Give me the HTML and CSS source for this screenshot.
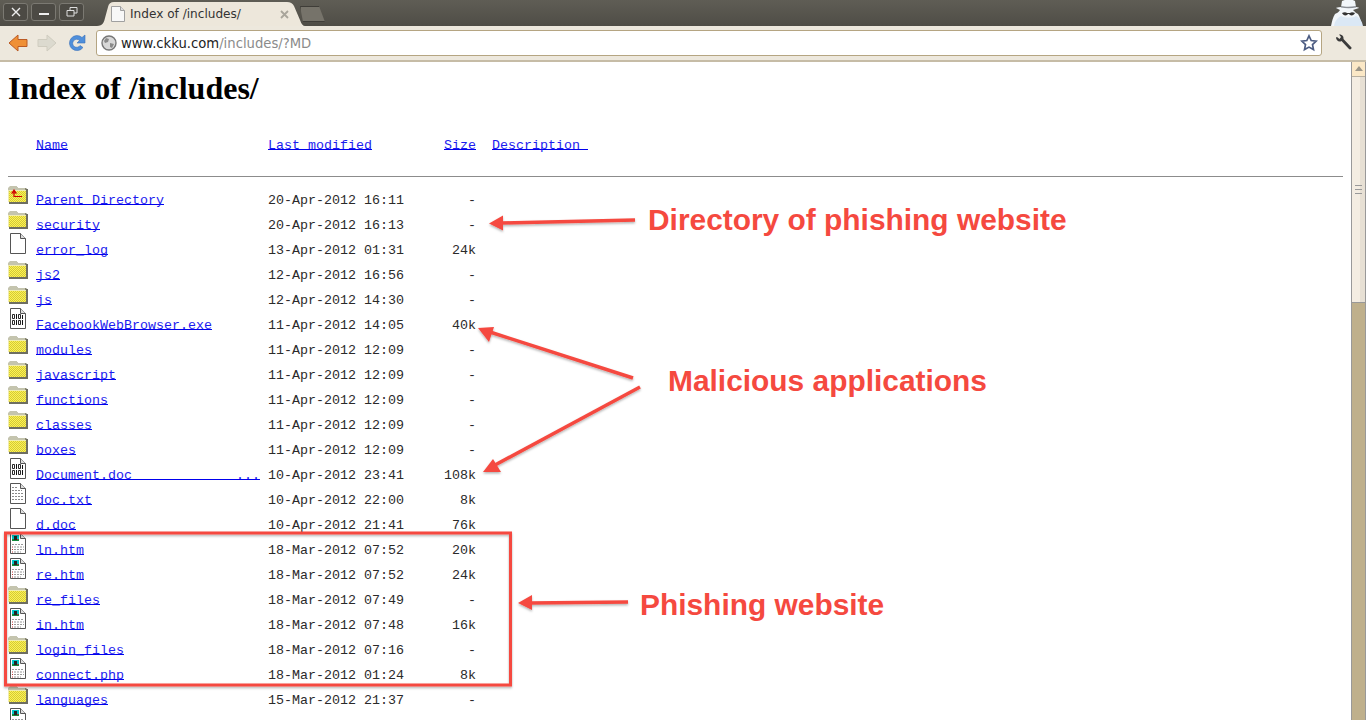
FILE: index.html
```html
<!DOCTYPE html>
<html lang="en">
<head>
  <meta charset="UTF-8">
  <title>Index of /includes/</title>
  <link rel="stylesheet" href="styles.css">
</head>
<body>
  <svg class="defs" width="0" height="0">
    <defs>
      <pattern id="dither" width="2" height="2" patternUnits="userSpaceOnUse">
        <rect width="2" height="2" fill="#fff650"/>
        <rect width="1" height="1" fill="#d2c63c"/>
        <rect x="1" y="1" width="1" height="1" fill="#d2c63c"/>
      </pattern>
      <symbol id="folder" viewBox="0 0 20 22">
        <path d="M1 8V6l2-2h5l2 2h8l1 1v14H1z" fill="#8a8a70"/>
        <path d="M0 8V6l2-2h6l2 2h7v2z" fill="#c4c4ae"/>
        <rect x="0" y="8" width="18" height="12" fill="url(#dither)"/>
        <path d="M0 8h18v1H1v11H0z" fill="#f0ecb0"/>
        <path d="M18 7h2v15H1v-2h17z" fill="#6e6e62"/>
      </symbol>
      <symbol id="parent" viewBox="0 0 20 22">
        <use href="#folder"/>
        <path d="M6 9v5.500h8M4 11l2-3 2 3z" fill="none" stroke="#d00000" stroke-width="1.200"/>
      </symbol>
      <symbol id="blank" viewBox="0 0 20 22">
        <path d="M2.500 1.500h10l5 5v15h-15z" fill="#fff" stroke="#555"/>
        <path d="M12.500 1.500v5h5" fill="#ddd" stroke="#555"/>
      </symbol>
      <symbol id="binary" viewBox="0 0 20 22">
        <use href="#blank"/>
        <path d="M4.500 7.500h2v4h-2zM10.500 7.500h2v4h-2zM4.500 13.500h2v4h-2zM10.500 13.500h2v4h-2z" fill="none" stroke="#111" stroke-width=".9"/>
        <path d="M8.500 7v5M14.500 8v4M8.500 13v5M14.500 13v5" stroke="#111" stroke-width="1"/>
      </symbol>
      <symbol id="text" viewBox="0 0 20 22">
        <use href="#blank"/>
        <path d="M4 5.500h6M4 8.500h10M4 11.500h12M4 14.500h12M4 17.500h12" stroke="#8a8a8a" stroke-dasharray="2 1"/>
      </symbol>
      <symbol id="html" viewBox="0 0 20 22">
        <use href="#blank"/>
        <rect x="4" y="3" width="7" height="4" fill="#00c8c8"/>
        <rect x="4" y="7" width="7" height="2" fill="#148a3c"/>
        <rect x="6" y="4" width="3" height="4" fill="#222"/>
        <rect x="9" y="7" width="1" height="1" fill="#d02020"/>
        <path d="M4 12.500h12M6 15h10M6 17.500h10" stroke="#999" stroke-dasharray="2 1"/>
        <path d="M4 15h1M4 17.500h1M4 20h1" stroke="#c03030"/>
        <path d="M6 20h7" stroke="#999" stroke-dasharray="2 1"/>
      </symbol>
    </defs>
  </svg>

  <div class="window">
    <div class="tabstrip">
      <div class="winbuttons">
        <span class="winbtn"><svg width="12" height="12" viewBox="0 0 12 12"><path d="M2 2l8 8M10 2l-8 8" stroke="#eee" stroke-width="1.400"/></svg></span>
        <span class="winbtn"><svg width="12" height="12" viewBox="0 0 12 12"><path d="M1 8h10" stroke="#eee" stroke-width="2"/></svg></span>
        <span class="winbtn"><svg width="12" height="12" viewBox="0 0 12 12"><path d="M4 4V1.500h7V7H8M1 4.500h7V10H1z" fill="none" stroke="#ddd"/></svg></span>
      </div>
      <div class="tab">
        <svg class="favicon" width="14" height="16" viewBox="0 0 14 16"><path d="M.5.500h9l4 4v11H.5z" fill="#f8f8f8" stroke="#a0a0a0"/><path d="M9.500.500v4h4" fill="#ddd" stroke="#a0a0a0"/></svg>
        <span class="tab-title">Index of /includes/</span>
        <svg class="tab-close" width="9" height="9" viewBox="0 0 9 9"><path d="M1 1l7 7M8 1L1 8" stroke="#a9a59b" stroke-width="1.800"/></svg>
      </div>
      <div class="newtab"></div>
      <svg class="spy" width="36" height="26" viewBox="0 0 36 26">
        <path d="M11 7l1-6c4-2 10-2 13 0l1 6c2 0 3 1 3 1l-6 2c2 2 3 3 5 4 2 3 3 7 4 12H1c1-5 2-9 4-12 2-1 4-2 5-4L6 8s2-1 5-1z" fill="#f2f6fa"/>
        <path d="M11 6c4 1 10 1 15 0v1.500c-5 1-10 1-15 0z" fill="#8b8f96"/>
        <path d="M12 13c2-1 4-1 5 0h3c1-1 3-1 5 0-1 2-3 3-5 2l-1-1h-1l-1 1c-2 1-4 0-5-2z" fill="#333"/>
        <path d="M4 26c1-5 3-8 7-10 4 2 12 2 15 0 4 2 6 5 7 10z" fill="#dbe8f5"/>
      </svg>
    </div>

    <div class="toolbar">
      <svg class="navicon back" width="20" height="20" viewBox="0 0 20 20"><path d="M1 10l9-8v4.500h9v7h-9V18z" fill="#ef9036" stroke="#bb5a24"/></svg>
      <svg class="navicon forward" width="20" height="20" viewBox="0 0 20 20"><path d="M19 10l-9-8v4.500H1v7h9V18z" fill="#dcdacf" stroke="#cfccbf"/></svg>
      <svg class="navicon reload" width="20" height="20" viewBox="0 0 20 20"><path d="M16 14.500a7.500 7.500 0 1 1-1-10L18 2v8h-8l2.500-2.500a4 4 0 1 0 .5 5z" fill="#4f8fdb" stroke="#3a70b8" stroke-width=".6"/></svg>
      <div class="omnibox">
        <svg class="globe" width="16" height="16" viewBox="0 0 16 16"><circle cx="8" cy="8" r="7" fill="#d8d8d8" stroke="#777" stroke-width="1.400"/><path d="M5 3l3 1-1 3-3 1-1-2zM9 8l4 1-2 4-2-1z" fill="#8a8a8a"/></svg>
        <span class="url"><span class="host">www.ckku.com</span>/includes/?MD</span>
        <svg class="star" width="18" height="18" viewBox="0 0 18 18"><path d="M9 1.800l2.200 4.700 5 .6-3.700 3.500 1 5L9 13.100l-4.500 2.500 1-5L1.800 7.100l5-.6z" fill="#fff" stroke="#4c5c82" stroke-width="1.700"/></svg>
      </div>
      <svg class="wrench" width="18" height="18" viewBox="0 0 18 18"><path d="M1 3.500c0 3 3 5 5.500 3.500l7.500 8c1 1 3 0 2.500-1.500L8.500 5C9 2.500 7 0 4 .5l2 2.500-1.500 2L2 3z" fill="#3b3b3b"/></svg>
    </div>

    <div class="viewer">
      <main class="page">
        <h1>Index of /includes/</h1>
        <div class="row head">
          <span class="name"><a href="#">Name</a></span>
          <span class="date"><a href="#">Last modified</a></span>
          <span class="size"><a href="#">Size</a></span>
          <span class="desc"><a href="#">Description </a></span>
        </div>
        <hr>
        <div class="listing">
          <div class="row"><svg class="icon"><use href="#parent"/></svg><span class="name"><a href="#">Parent Directory</a></span><span class="date">20-Apr-2012 16:11</span><span class="size">-</span></div>
          <div class="row"><svg class="icon"><use href="#folder"/></svg><span class="name"><a href="#">security</a></span><span class="date">20-Apr-2012 16:13</span><span class="size">-</span></div>
          <div class="row"><svg class="icon"><use href="#blank"/></svg><span class="name"><a href="#">error_log</a></span><span class="date">13-Apr-2012 01:31</span><span class="size">24k</span></div>
          <div class="row"><svg class="icon"><use href="#folder"/></svg><span class="name"><a href="#">js2</a></span><span class="date">12-Apr-2012 16:56</span><span class="size">-</span></div>
          <div class="row"><svg class="icon"><use href="#folder"/></svg><span class="name"><a href="#">js</a></span><span class="date">12-Apr-2012 14:30</span><span class="size">-</span></div>
          <div class="row"><svg class="icon"><use href="#binary"/></svg><span class="name"><a href="#">FacebookWebBrowser.exe</a></span><span class="date">11-Apr-2012 14:05</span><span class="size">40k</span></div>
          <div class="row"><svg class="icon"><use href="#folder"/></svg><span class="name"><a href="#">modules</a></span><span class="date">11-Apr-2012 12:09</span><span class="size">-</span></div>
          <div class="row"><svg class="icon"><use href="#folder"/></svg><span class="name"><a href="#">javascript</a></span><span class="date">11-Apr-2012 12:09</span><span class="size">-</span></div>
          <div class="row"><svg class="icon"><use href="#folder"/></svg><span class="name"><a href="#">functions</a></span><span class="date">11-Apr-2012 12:09</span><span class="size">-</span></div>
          <div class="row"><svg class="icon"><use href="#folder"/></svg><span class="name"><a href="#">classes</a></span><span class="date">11-Apr-2012 12:09</span><span class="size">-</span></div>
          <div class="row"><svg class="icon"><use href="#folder"/></svg><span class="name"><a href="#">boxes</a></span><span class="date">11-Apr-2012 12:09</span><span class="size">-</span></div>
          <div class="row"><svg class="icon"><use href="#binary"/></svg><span class="name"><a href="#">Document.doc             ...</a></span><span class="date">10-Apr-2012 23:41</span><span class="size">108k</span></div>
          <div class="row"><svg class="icon"><use href="#text"/></svg><span class="name"><a href="#">doc.txt</a></span><span class="date">10-Apr-2012 22:00</span><span class="size">8k</span></div>
          <div class="row"><svg class="icon"><use href="#blank"/></svg><span class="name"><a href="#">d.doc</a></span><span class="date">10-Apr-2012 21:41</span><span class="size">76k</span></div>
          <div class="row"><svg class="icon"><use href="#html"/></svg><span class="name"><a href="#">ln.htm</a></span><span class="date">18-Mar-2012 07:52</span><span class="size">20k</span></div>
          <div class="row"><svg class="icon"><use href="#html"/></svg><span class="name"><a href="#">re.htm</a></span><span class="date">18-Mar-2012 07:52</span><span class="size">24k</span></div>
          <div class="row"><svg class="icon"><use href="#folder"/></svg><span class="name"><a href="#">re_files</a></span><span class="date">18-Mar-2012 07:49</span><span class="size">-</span></div>
          <div class="row"><svg class="icon"><use href="#html"/></svg><span class="name"><a href="#">in.htm</a></span><span class="date">18-Mar-2012 07:48</span><span class="size">16k</span></div>
          <div class="row"><svg class="icon"><use href="#folder"/></svg><span class="name"><a href="#">login_files</a></span><span class="date">18-Mar-2012 07:16</span><span class="size">-</span></div>
          <div class="row"><svg class="icon"><use href="#html"/></svg><span class="name"><a href="#">connect.php</a></span><span class="date">18-Mar-2012 01:24</span><span class="size">8k</span></div>
          <div class="row"><svg class="icon"><use href="#folder"/></svg><span class="name"><a href="#">languages</a></span><span class="date">15-Mar-2012 21:37</span><span class="size">-</span></div>
          <div class="row"><svg class="icon"><use href="#html"/></svg></div>
        </div>
      </main>
      <div class="scrollbar">
        <div class="scroll-up"></div>
        <div class="scroll-thumb"><span class="grip"></span></div>
        <div class="scroll-track"></div>
      </div>
    </div>
  </div>

  <!-- red notes drawn on top of the screenshot -->
  <svg class="arrows" width="1366" height="720" viewBox="0 0 1366 720">
    <defs>
      <filter id="soft" x="-5%" y="-5%" width="110%" height="115%">
        <feDropShadow dx="0" dy="1.500" stdDeviation="1" flood-color="#000" flood-opacity=".3"/>
      </filter>
    </defs>
    <g filter="url(#soft)" fill="#f5493f" stroke="#f5493f">
      <rect x="5.500" y="533" width="505" height="152" fill="none" stroke-width="3"/>
      <path d="M635 220L500 223" stroke-width="3.500"/>
      <path d="M489 223.500l14-8v15z" stroke="none"/>
      <path d="M633 378L490 332" stroke-width="3.500"/>
      <path d="M478 328l16-1-5 15z" stroke="none"/>
      <path d="M640 387L495 465" stroke-width="3.500"/>
      <path d="M483 472l10-13 8 13z" stroke="none"/>
      <path d="M628 602L530 603" stroke-width="3.500"/>
      <path d="M518 603l14-8v15z" stroke="none"/>
    </g>
  </svg>
  <div class="note note-dir">Directory of phishing website</div>
  <div class="note note-app">Malicious applications</div>
  <div class="note note-web">Phishing website</div>
</body>
</html>
```
FILE: styles.css
```css
html, body {
  margin: 0;
  height: 100%;
  overflow: hidden;
  background: #fff;
}

.defs {
  position: absolute;
}

.window {
  display: flex;
  flex-direction: column;
  height: 720px;
}

/* browser chrome */
.tabstrip {
  display: flex;
  height: 26px;
  background: linear-gradient(#5f5d55, #4f4d46);
}

.winbuttons {
  display: flex;
  gap: 3px;
  padding: 3px 0 0 3px;
  width: 97px;
  box-sizing: border-box;
}

.winbtn {
  display: flex;
  justify-content: center;
  align-items: center;
  width: 23px;
  height: 16px;
  border: 1px solid #7b7972;
  border-radius: 3px;
  background: #4c4a44;
}

.tab {
  display: flex;
  align-items: center;
  width: 208px;
  height: 24px;
  margin-top: 2px;
  background: #ede7db;
  clip-path: path("M0 24C6 24 7 20 8 16L11 5Q12 0 17 0H190Q195 0 197 4L203 18Q205 24 208 24Z");
  font: 12.1px "DejaVu Sans", sans-serif;
  color: #333;
}

.favicon {
  margin-left: 14px;
}

.tab-title {
  margin-left: 5px;
  width: 150px;
}

.newtab {
  width: 26px;
  height: 16px;
  margin: 6px 0 0 -5px;
  background: #76736a;
  border: 1px solid #3f3d38;
  box-sizing: border-box;
  clip-path: path("M0 0H19L25 16H3Z");
}

.spy {
  margin-left: auto;
}

.toolbar {
  display: flex;
  align-items: center;
  height: 36px;
  box-sizing: border-box;
  background: #ede8dd;
  border-bottom: 2px solid #c6bca6;
}

.navicon {
  flex: none;
  width: 20px;
  height: 20px;
}

.back {
  margin-left: 8px;
}

.forward {
  margin-left: 9px;
}

.reload {
  margin-left: 10px;
}

.omnibox {
  display: flex;
  align-items: center;
  flex: 1;
  height: 26px;
  margin: 0 13px 0 9px;
  padding: 0 3px 0 4px;
  box-sizing: border-box;
  background: #fff;
  border: 1px solid #b5a582;
  border-radius: 3px;
  font: 13.2px "DejaVu Sans", sans-serif;
  color: #8b8b8b;
}

.url {
  margin-left: 4px;
}

.host {
  color: #222;
}

.star {
  margin-left: auto;
}

.wrench {
  margin-right: 13px;
}

.viewer {
  display: flex;
  flex: 1;
  min-height: 0;
}

/* directory listing */
.page {
  flex: 1;
  min-width: 0;
  padding: 8px 8px 0;
  overflow: hidden;
  font: 13.33px/15px "Liberation Mono", monospace;
  color: #2a2a2a;
}

h1 {
  margin: 0 0 31px;
  font: bold 32px/37px "Liberation Serif", serif;
  color: #000;
}

a {
  color: #1c1cee;
  text-decoration-color: #0000ee;
  text-decoration-skip-ink: none;
  text-decoration-thickness: 1px;
  text-underline-offset: 0;
  white-space: pre;
}

.row {
  display: flex;
  align-items: baseline;
  height: 25px;
  padding-top: 2px;
  box-sizing: border-box;
  white-space: pre;
}

.row.head {
  height: auto;
  padding: 0 0 0 28px;
}

.icon {
  flex: none;
  width: 20px;
  height: 22px;
  margin-right: 8px;
}

.name {
  width: 232px;
}

.date {
  width: 136px;
}

.size {
  width: 72px;
  text-align: right;
}

.desc {
  margin-left: 16px;
}

hr {
  margin: 23px 0 3px;
  height: 1px;
  border: 0;
  background: #8c8c8c;
}

/* scrollbar */
.scrollbar {
  display: flex;
  flex-direction: column;
  flex: none;
  width: 15px;
  box-sizing: border-box;
  border-left: 1px solid #999;
  border-right: 1px solid #999;
}

.scroll-up {
  flex: none;
  height: 14px;
  background: #fbe8c6;
  border-bottom: 1px solid #b8b0a0;
  position: relative;
}

.scroll-up::after {
  content: "";
  position: absolute;
  left: 3px;
  top: 4px;
  border: 4px solid transparent;
  border-top: 0;
  border-bottom: 5px solid #9c9688;
}

.scroll-thumb {
  display: flex;
  justify-content: center;
  align-items: center;
  flex: none;
  height: 225px;
  background: linear-gradient(90deg, #f4ede2 60%, #e7e0d4 60%);
  border-bottom: 1px solid #999;
}

.grip {
  width: 7px;
  height: 7px;
  border-top: 1px solid #999;
  border-bottom: 1px solid #999;
  background: linear-gradient(#999, #999) center / 100% 1px no-repeat;
}

.scroll-track {
  flex: 1;
  background: #bfb08c;
}

/* annotations */
.arrows {
  position: absolute;
  left: 0;
  top: 0;
  pointer-events: none;
}

.note {
  position: absolute;
  font: bold 29.9px/34px "Liberation Sans", sans-serif;
  color: #f5493f;
  white-space: nowrap;
}

.note-dir {
  left: 648px;
  top: 203px;
}

.note-app {
  left: 668px;
  top: 364px;
}

.note-web {
  left: 640px;
  top: 588px;
}
```
